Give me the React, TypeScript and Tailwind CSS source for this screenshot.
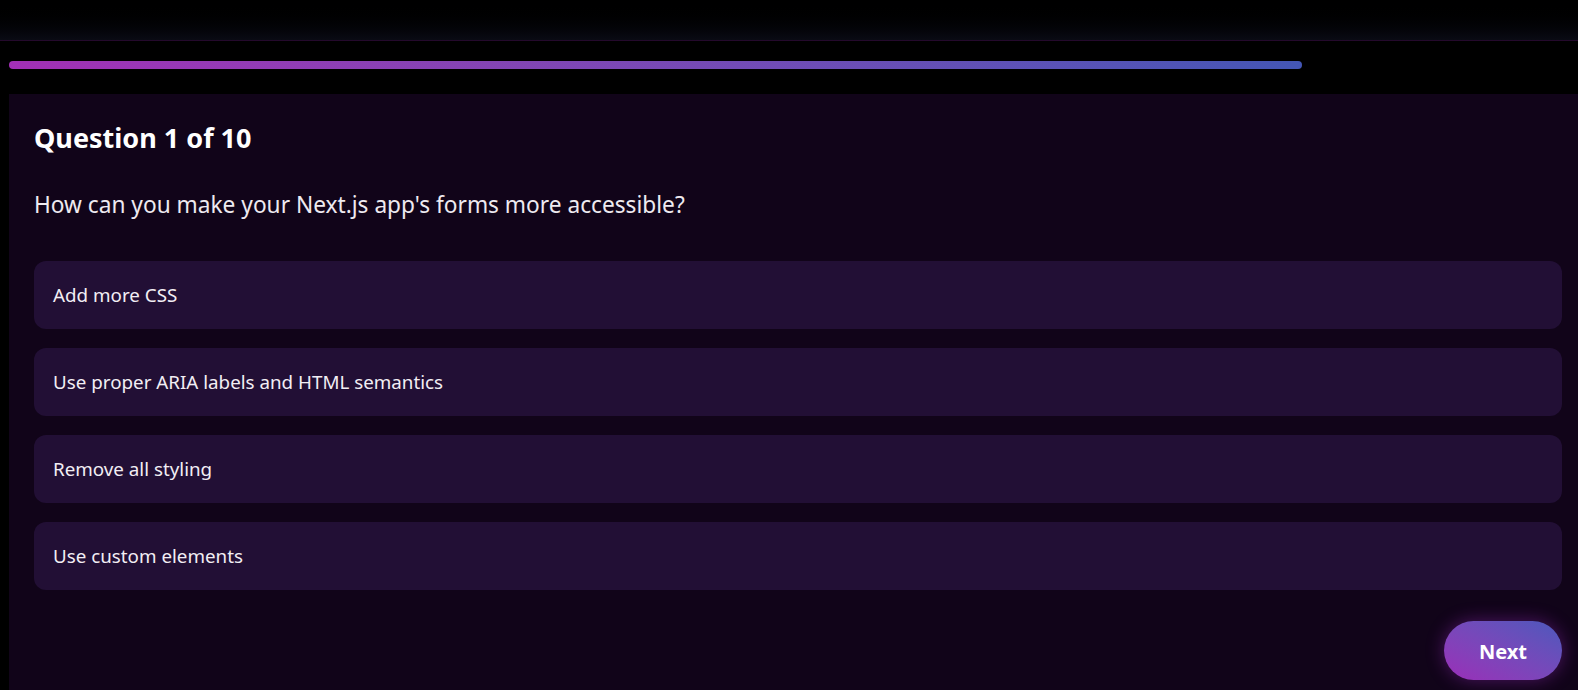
const options = [
  "Add more CSS",
  "Use proper ARIA labels and HTML semantics",
  "Remove all styling",
  "Use custom elements",
];

export default function App() {
  return (
    <div
      className="h-[690px] w-screen overflow-hidden bg-black text-white"
      style={{ fontFamily: '"Segoe UI", "Noto Sans", sans-serif' }}
    >
      <header className="h-[41px] border-b border-[#24092c] bg-gradient-to-b from-black to-[#0a0b14]" />

      <div className="pl-[9px] pt-[20px]">
        <div className="h-[8px] w-[1293px] rounded-full bg-gradient-to-r from-[#a22fb6] to-[#4356b5]" />
      </div>

      <main className="ml-[9px] mt-[25px] w-[1578px] bg-[#110419] px-[25px] pb-10 pt-[25px]">
        <h2 className="text-[27px] font-bold leading-[38px] text-white">Question 1 of 10</h2>
        <p className="mt-[32px] text-[22.7px] leading-[32px] text-[#eeeaf0]">
          How can you make your Next.js app's forms more accessible?
        </p>

        <div className="mt-[40px] flex flex-col gap-[19px]">
          {options.map((o) => (
            <button
              key={o}
              type="button"
              className="flex h-[68px] items-center rounded-xl bg-[#220f35] px-[19px] text-left text-[18.8px] text-[#f2eef4]"
            >
              {o}
            </button>
          ))}
        </div>

        <div className="mt-[31px] flex justify-end">
          <button
            type="button"
            className="h-[59px] w-[118px] rounded-full bg-gradient-to-tr from-[#9a2cb8] to-[#4a58bc] pt-[2px] text-[20px] font-bold text-white shadow-[0_0_18px_rgba(150,40,190,0.45)]"
          >
            Next
          </button>
        </div>
      </main>
    </div>
  );
}
